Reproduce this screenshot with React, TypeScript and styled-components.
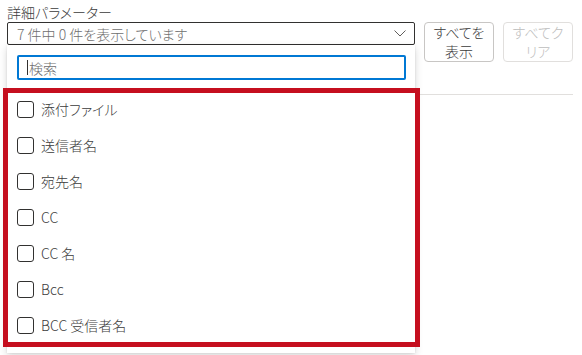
import styled, { createGlobalStyle } from 'styled-components';

const GlobalStyle = createGlobalStyle`
  html, body, #root {
    height: 100%;
  }
  body {
    margin: 0;
    background: #fff;
    font-family: 'Noto Sans CJK JP', 'Noto Sans', sans-serif;
    font-feature-settings: 'palt';
    font-weight: 300;
    color: #3b3b3b;
  }
`;

const Page = styled.div`
  box-sizing: border-box;
  width: 582px;
  min-height: 355px;
  padding: 2px 9px 0 7px;
`;

const Label = styled.div`
  font-size: 14px;
  line-height: 20px;
`;

const TopRow = styled.div`
  display: flex;
  align-items: flex-start;
  gap: 9px;
`;

const PickerArea = styled.div`
  position: relative;
  width: 409px;
`;

const Dropdown = styled.div`
  display: flex;
  align-items: center;
  justify-content: space-between;
  height: 21px;
  padding: 0 8px 0 9px;
  border: 1px solid #323130;
  border-radius: 2px;
  font-size: 14px;
  color: #6e6e6e;
`;

const Panel = styled.div`
  position: absolute;
  top: 100%;
  left: 0;
  right: 0;
  z-index: 2;
  padding: 10px 9px 6px 10px;
  background: #fff;
  box-shadow: 0 3px 8px rgba(0, 0, 0, 0.16), 0 0 2px rgba(0, 0, 0, 0.1);
`;

const SearchBox = styled.div`
  display: flex;
  align-items: center;
  height: 21px;
  padding: 0 8px;
  border: 2px solid #0078d4;
  border-radius: 2px;
  font-size: 14px;
  color: #6e6e6e;
`;

const Caret = styled.span`
  width: 1px;
  height: 15px;
  margin-right: 1px;
  background: #323130;
`;

const OptionList = styled.div`
  display: flex;
  flex-direction: column;
  gap: 18px;
  margin: 8px -14px 0 -14px;
  padding: 7px 0 8px 9px;
  border: 5px solid #c50f1f;
`;

const Option = styled.label`
  display: flex;
  align-items: center;
  gap: 7px;
  height: 18px;
  font-size: 14px;
`;

const Box = styled.span`
  width: 15px;
  height: 15px;
  border: 1px solid #323130;
  border-radius: 3px;
`;

const Actions = styled.div`
  display: flex;
  gap: 9px;
`;

const ActionButton = styled.button<{ $disabled?: boolean }>`
  width: 70px;
  height: 40px;
  padding: 0 4px;
  border: 1px solid ${(p) => (p.$disabled ? '#e1dfdd' : '#c8c6c4')};
  border-radius: 4px;
  background: #fff;
  font-family: inherit;
  font-feature-settings: 'palt';
  font-weight: 300;
  font-size: 14px;
  line-height: 19px;
  color: ${(p) => (p.$disabled ? '#bdbdbd' : '#3b3b3b')};
`;

const Divider = styled.div`
  height: 1px;
  margin-top: 32px;
  background: #e1dfdd;
`;

const options = ['添付ファイル', '送信者名', '宛先名', 'CC', 'CC 名', 'Bcc', 'BCC 受信者名'];

export default function App() {
  return (
    <Page>
      <GlobalStyle />
      <Label>詳細パラメーター</Label>
      <TopRow>
        <PickerArea>
          <Dropdown>
            <span>7 件中 0 件を表示しています</span>
            <svg width="12" height="7" viewBox="0 0 12 7">
              <path d="M0.5 0.5 L6 6 L11.5 0.5" fill="none" stroke="#605e5c" strokeWidth="1" />
            </svg>
          </Dropdown>
          <Panel>
            <SearchBox>
              <Caret />
              <span>検索</span>
            </SearchBox>
            <OptionList>
              {options.map((o) => (
                <Option key={o}>
                  <Box />
                  {o}
                </Option>
              ))}
            </OptionList>
          </Panel>
        </PickerArea>
        <Actions>
          <ActionButton>
            すべてを
            <br />
            表示
          </ActionButton>
          <ActionButton $disabled>
            すべてク
            <br />
            リア
          </ActionButton>
        </Actions>
      </TopRow>
      <Divider />
    </Page>
  );
}
